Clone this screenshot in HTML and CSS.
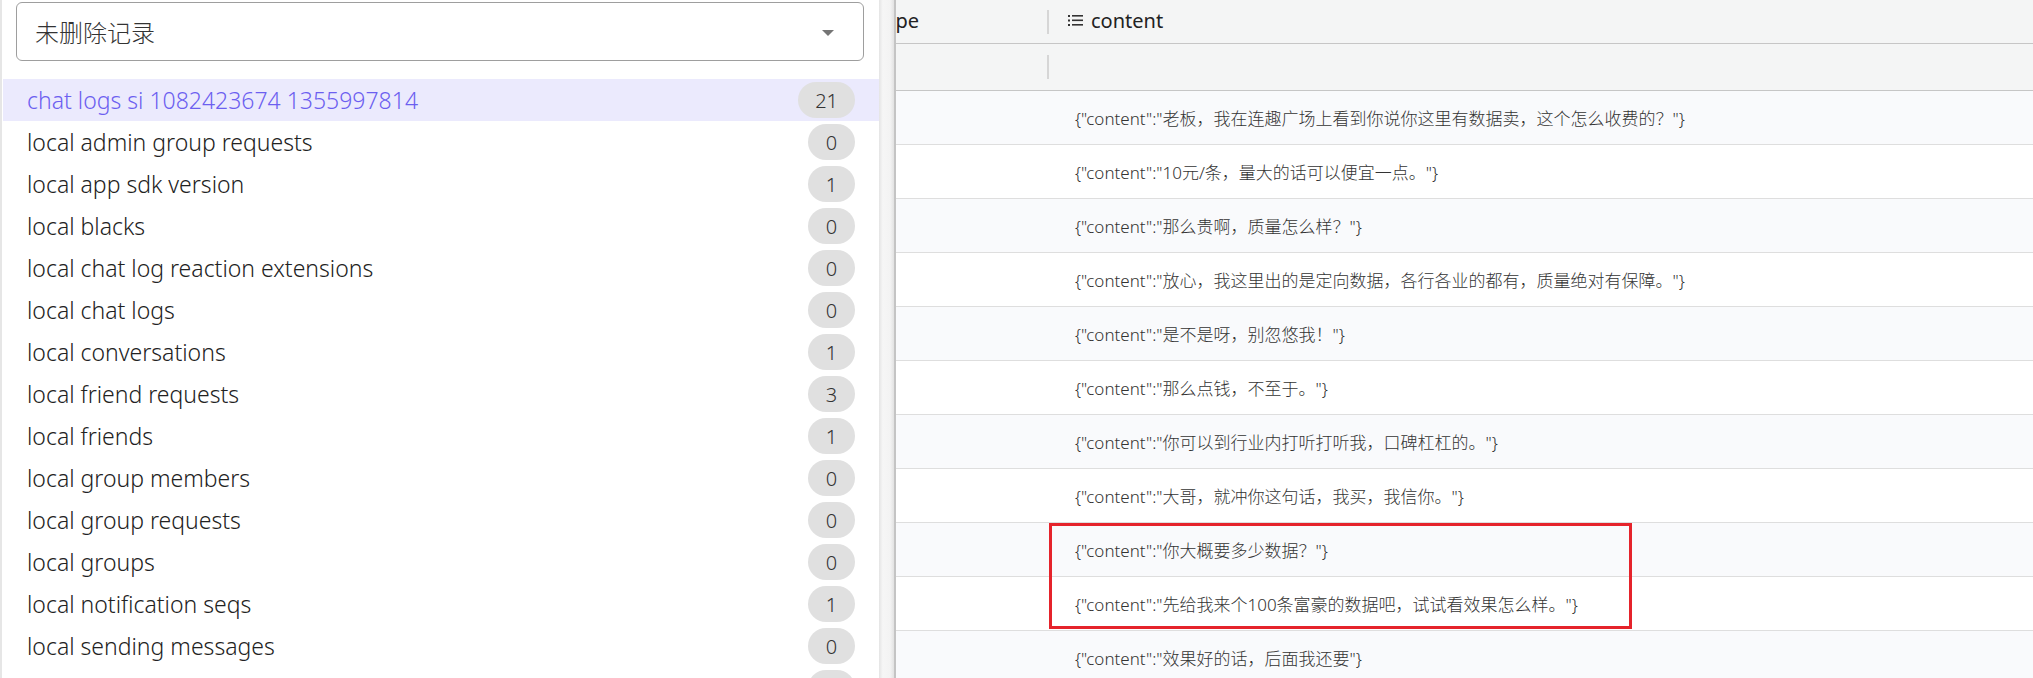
FILE: index.html
```html
<!DOCTYPE html>
<html lang="zh-CN">
<head>
  <meta charset="UTF-8" />
  <meta name="viewport" content="width=device-width, initial-scale=1.0" />
  <title>本地数据库</title>
  <link rel="stylesheet" href="styles.css">
</head>
<body>
  <div class="app">
    <aside class="sidebar">
      <div class="picker">
        <span>未删除记录</span>
        <svg class="picker-arrow" width="12" height="6" viewBox="0 0 12 6"><path d="M0 0h12L6 6z" fill="#757575"/></svg>
      </div>
      <ul class="tables">
        <li class="active"><span class="name">chat logs si 1082423674 1355997814</span><span class="count">21</span></li>
        <li><span class="name">local admin group requests</span><span class="count">0</span></li>
        <li><span class="name">local app sdk version</span><span class="count">1</span></li>
        <li><span class="name">local blacks</span><span class="count">0</span></li>
        <li><span class="name">local chat log reaction extensions</span><span class="count">0</span></li>
        <li><span class="name">local chat logs</span><span class="count">0</span></li>
        <li><span class="name">local conversations</span><span class="count">1</span></li>
        <li><span class="name">local friend requests</span><span class="count">3</span></li>
        <li><span class="name">local friends</span><span class="count">1</span></li>
        <li><span class="name">local group members</span><span class="count">0</span></li>
        <li><span class="name">local group requests</span><span class="count">0</span></li>
        <li><span class="name">local groups</span><span class="count">0</span></li>
        <li><span class="name">local notification seqs</span><span class="count">1</span></li>
        <li><span class="name">local sending messages</span><span class="count">0</span></li>
        <li><span class="name">local stranger</span><span class="count">0</span></li>
      </ul>
    </aside>

    <div class="splitter"></div>

    <main class="grid">
      <div class="grid-inner">
        <div class="row head">
          <div class="cell col-type">
            <svg class="col-icon" width="15" height="11" viewBox="0 0 15 11"><g fill="#333"><rect x="0" y="0" width="2" height="2"/><rect x="0" y="4.5" width="2" height="2"/><rect x="0" y="9" width="2" height="2"/><rect x="4" y="0" width="11" height="1.6"/><rect x="4" y="4.5" width="11" height="1.6"/><rect x="4" y="9" width="11" height="1.6"/></g></svg>
            <span>type</span>
          </div>
          <div class="sep"></div>
          <div class="cell col-content">
            <svg class="col-icon" width="15" height="11" viewBox="0 0 15 11"><g fill="#333"><rect x="0" y="0" width="2" height="2"/><rect x="0" y="4.5" width="2" height="2"/><rect x="0" y="9" width="2" height="2"/><rect x="4" y="0" width="11" height="1.6"/><rect x="4" y="4.5" width="11" height="1.6"/><rect x="4" y="9" width="11" height="1.6"/></g></svg>
            <span>content</span>
          </div>
        </div>
        <div class="row filter">
          <div class="cell col-type"></div>
          <div class="sep"></div>
          <div class="cell col-content"></div>
        </div>

        <div class="row data"><div class="cell col-type"></div><div class="gap"></div><div class="cell col-content">{"content":"老板，我在连趣广场上看到你说你这里有数据卖，这个怎么收费的？"}</div></div>
        <div class="row data"><div class="cell col-type"></div><div class="gap"></div><div class="cell col-content">{"content":"10元/条，量大的话可以便宜一点。"}</div></div>
        <div class="row data"><div class="cell col-type"></div><div class="gap"></div><div class="cell col-content">{"content":"那么贵啊，质量怎么样？"}</div></div>
        <div class="row data"><div class="cell col-type"></div><div class="gap"></div><div class="cell col-content">{"content":"放心，我这里出的是定向数据，各行各业的都有，质量绝对有保障。"}</div></div>
        <div class="row data"><div class="cell col-type"></div><div class="gap"></div><div class="cell col-content">{"content":"是不是呀，别忽悠我！"}</div></div>
        <div class="row data"><div class="cell col-type"></div><div class="gap"></div><div class="cell col-content">{"content":"那么点钱，不至于。"}</div></div>
        <div class="row data"><div class="cell col-type"></div><div class="gap"></div><div class="cell col-content">{"content":"你可以到行业内打听打听我，口碑杠杠的。"}</div></div>
        <div class="row data"><div class="cell col-type"></div><div class="gap"></div><div class="cell col-content">{"content":"大哥，就冲你这句话，我买，我信你。"}</div></div>
        <div class="row data"><div class="cell col-type"></div><div class="gap"></div><div class="cell col-content">{"content":"你大概要多少数据？"}</div></div>
        <div class="row data"><div class="cell col-type"></div><div class="gap"></div><div class="cell col-content">{"content":"先给我来个100条富豪的数据吧，试试看效果怎么样。"}</div></div>
        <div class="row data"><div class="cell col-type"></div><div class="gap"></div><div class="cell col-content">{"content":"效果好的话，后面我还要"}</div></div>
      </div>

      <!-- highlight box drawn over rows 9-10 -->
      <div class="mark"></div>
    </main>
  </div>
</body>
</html>
```

FILE: styles.css
```css
* {
  margin: 0;
  padding: 0;
  box-sizing: border-box;
}
body {
  background: #fff;
  font-family: "Noto Sans", "Noto Sans CJK SC", sans-serif;
  color: #222;
  height: 100vh;
  overflow: hidden;
}
.app {
  display: flex;
  height: 100vh;
}

/* left: table list */
.sidebar {
  flex: 0 0 879px;
  border-left: 2px solid #e6e6e6;
  padding-left: 1px;
  overflow: hidden;
}
.picker {
  margin: 2px 15px 18px 13px;
  height: 59px;
  border: 1px solid #9e9e9e;
  border-radius: 6px;
  display: flex;
  align-items: center;
  justify-content: space-between;
  padding: 0 29px 0 18px;
  font-family: "Noto Sans CJK SC", sans-serif;
  font-size: 24px;
  font-weight: 300;
  color: #333;
}
.picker-arrow {
  margin-top: 2px;
}
.tables {
  list-style: none;
}
.tables li {
  height: 42px;
  display: flex;
  align-items: center;
  justify-content: space-between;
  padding: 0 24px;
  font-size: 23px;
  font-weight: 300;
  color: #222;
}
.tables li.active {
  background: #ebeafd;
  color: #6c5ff0;
}
.count {
  height: 36px;
  min-width: 47px;
  padding: 0 17px;
  border-radius: 18px;
  background: #e0e0e0;
  color: #333;
  font-size: 20px;
  display: flex;
  align-items: center;
  justify-content: center;
}

.splitter {
  flex: 0 0 15px;
  background: linear-gradient(to right, #e4e4e4, #f6f6f6 25%, #f3f3f3 75%, #e2e2e2);
}

/* right: data grid */
.grid {
  flex: 1;
  position: relative;
  border-left: 2px solid #c4c4c4;
  overflow: hidden;
}
.grid-inner {
  margin-left: -60px;
}
.row {
  display: flex;
}
.cell {
  display: flex;
  align-items: center;
}
.col-type {
  flex: 0 0 211px;
  padding-left: 19px;
}
.col-content {
  flex: 1;
  padding-left: 19px;
  white-space: nowrap;
}
.sep {
  flex: 0 0 2px;
  height: 24px;
  align-self: center;
  background: #d6d6d6;
}
.gap {
  flex: 0 0 2px;
}
.head,
.filter {
  background: #f4f5f5;
  border-bottom: 1px solid #c6c6c6;
}
.head {
  height: 44px;
  font-size: 20px;
  color: #222;
}
.head .cell {
  gap: 8px;
  padding-bottom: 2px;
}
.filter {
  height: 47px;
}
.data {
  height: 54px;
  border-bottom: 1px solid #dedede;
  font-size: 17px;
  font-weight: 300;
  color: #333;
}
.data:nth-child(odd) {
  background: #f9fafc;
}
.data .col-content {
  padding-left: 26px;
}

.mark {
  position: absolute;
  left: 153px;
  top: 523px;
  width: 583px;
  height: 106px;
  border: 3px solid #e5232b;
}
```
